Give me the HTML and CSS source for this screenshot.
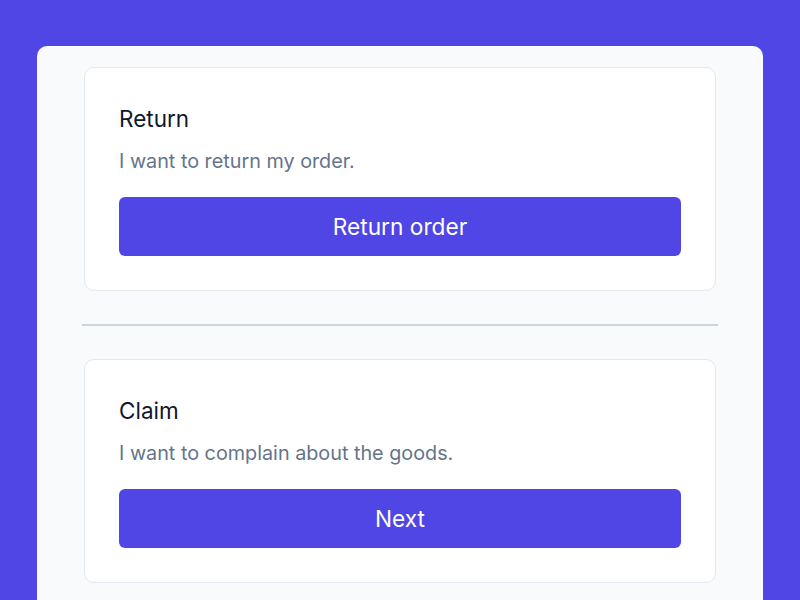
FILE: index.html
```html
<!DOCTYPE html>
<html lang="en">
<head>
    <meta charset="UTF-8">
    <meta name="viewport" content="width=device-width, initial-scale=1.0">
    <title>Order options</title>
    <link rel="stylesheet" href="styles.css">
</head>
<body>
    <main class="panel">
        <section class="option-card">
            <h2 class="option-title">Return</h2>
            <p class="option-text">I want to return my order.</p>
            <button class="option-button">Return order</button>
        </section>

        <hr class="divider">

        <section class="option-card">
            <h2 class="option-title">Claim</h2>
            <p class="option-text">I want to complain about the goods.</p>
            <button class="option-button">Next</button>
        </section>
    </main>
</body>
</html>
```

FILE: styles.css
```css
body {
    margin: 0;
    padding: 46px 37px 0;
    background-color: #4f46e5;
    font-family: Inter, "Noto Sans", sans-serif;
}

.panel {
    background-color: #f8fafc;
    border-radius: 10px 10px 0 0;
    padding: 21px 45px 40px;
    min-height: 600px;
}

.option-card {
    margin: 0 2px;
    padding: 34px;
    background-color: #fff;
    border: 1px solid #e2e8f0;
    border-radius: 10px;
}

.option-title {
    margin: 0;
    font-size: 22.5px;
    line-height: 33px;
    font-weight: 400;
    color: #0f172a;
}

.option-text {
    margin: 11px 0 0;
    font-size: 19.8px;
    line-height: 30px;
    color: #64748b;
}

.option-button {
    display: block;
    width: 100%;
    height: 59px;
    margin-top: 21px;
    background-color: #4f46e5;
    color: #fff;
    border: none;
    border-radius: 6px;
    font-family: inherit;
    font-size: 22.7px;
    font-weight: 400;
    cursor: pointer;
}

.divider {
    margin: 33px 0 33px;
    border: none;
    height: 2px;
    background-color: #cbd5e1;
}
```
